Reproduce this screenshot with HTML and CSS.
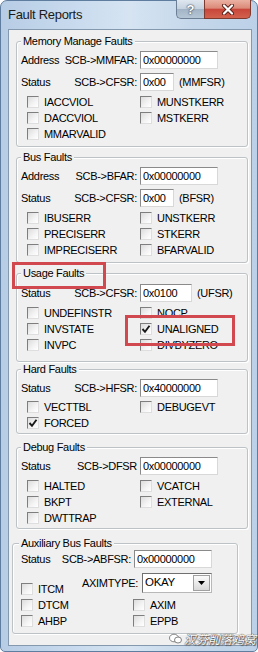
FILE: index.html
```html
<!DOCTYPE html>
<html>
<head>
<meta charset="utf-8">
<link rel="stylesheet" href="styles.css">
</head>
<body>
<div class="window">
  <div class="titlebar">
    <span class="title">Fault Reports</span>
    <div class="btns">
      <span class="btn help">?</span>
      <span class="btn close"><svg width="14" height="11" viewBox="0 0 14 11"><path d="M3 1.5 L11 9.5 M11 1.5 L3 9.5" stroke="#5a1e16" stroke-width="4" stroke-linecap="round"/><path d="M3 1.5 L11 9.5 M11 1.5 L3 9.5" stroke="#fff" stroke-width="2.2" stroke-linecap="round"/></svg></span>
    </div>
  </div>
  <div class="client">
    <div class="group g1">
      <span class="legend">Memory Manage Faults</span>
      <div class="row"><div class="lab"><span>Address</span><span>SCB-&gt;MMFAR:</span></div><span class="tb w78">0x00000000</span></div>
      <div class="row next"><div class="lab"><span>Status</span><span>SCB-&gt;CFSR:</span></div><span class="tb w34">0x00</span><span class="sfx">(MMFSR)</span></div>
      <div class="checks">
        <div class="cb"><span class="box"></span>IACCVIOL</div>
        <div class="cb"><span class="box"></span>MUNSTKERR</div>
        <div class="cb"><span class="box"></span>DACCVIOL</div>
        <div class="cb"><span class="box"></span>MSTKERR</div>
        <div class="cb"><span class="box"></span>MMARVALID</div>
      </div>
    </div>
    <div class="group g2">
      <span class="legend">Bus Faults</span>
      <div class="row"><div class="lab"><span>Address</span><span>SCB-&gt;BFAR:</span></div><span class="tb w78">0x00000000</span></div>
      <div class="row next"><div class="lab"><span>Status</span><span>SCB-&gt;CFSR:</span></div><span class="tb w34">0x00</span><span class="sfx">(BFSR)</span></div>
      <div class="checks">
        <div class="cb"><span class="box"></span>IBUSERR</div>
        <div class="cb"><span class="box"></span>UNSTKERR</div>
        <div class="cb"><span class="box"></span>PRECISERR</div>
        <div class="cb"><span class="box"></span>STKERR</div>
        <div class="cb"><span class="box"></span>IMPRECISERR</div>
        <div class="cb"><span class="box"></span>BFARVALID</div>
      </div>
    </div>
    <div class="group g3">
      <span class="legend">Usage Faults</span>
      <div class="row"><div class="lab"><span>Status</span><span>SCB-&gt;CFSR:</span></div><span class="tb w52">0x0100</span><span class="sfx">(UFSR)</span></div>
      <div class="checks">
        <div class="cb"><span class="box"></span>UNDEFINSTR</div>
        <div class="cb"><span class="box"></span>NOCP</div>
        <div class="cb"><span class="box"></span>INVSTATE</div>
        <div class="cb"><span class="box checked"><svg width="10" height="10" viewBox="0 0 10 10"><path d="M1.5 5 L4 7.8 L8.5 1.8" fill="none" stroke="#1a1a1a" stroke-width="1.9"/></svg></span>UNALIGNED</div>
        <div class="cb"><span class="box"></span>INVPC</div>
        <div class="cb"><span class="box"></span>DIVBYZERO</div>
      </div>
      <span class="mark mark-title"></span>
      <span class="mark mark-item"></span>
    </div>
    <div class="group g4">
      <span class="legend">Hard Faults</span>
      <div class="row"><div class="lab"><span>Status</span><span>SCB-&gt;HFSR:</span></div><span class="tb w78">0x40000000</span></div>
      <div class="checks">
        <div class="cb"><span class="box"></span>VECTTBL</div>
        <div class="cb"><span class="box"></span>DEBUGEVT</div>
        <div class="cb"><span class="box checked"><svg width="10" height="10" viewBox="0 0 10 10"><path d="M1.5 5 L4 7.8 L8.5 1.8" fill="none" stroke="#1a1a1a" stroke-width="1.9"/></svg></span>FORCED</div>
      </div>
    </div>
    <div class="group g5">
      <span class="legend">Debug Faults</span>
      <div class="row"><div class="lab"><span>Status</span><span>SCB-&gt;DFSR</span></div><span class="tb w78">0x00000000</span></div>
      <div class="checks">
        <div class="cb"><span class="box"></span>HALTED</div>
        <div class="cb"><span class="box"></span>VCATCH</div>
        <div class="cb"><span class="box"></span>BKPT</div>
        <div class="cb"><span class="box"></span>EXTERNAL</div>
        <div class="cb"><span class="box"></span>DWTTRAP</div>
      </div>
    </div>
    <div class="group g6">
      <span class="legend">Auxiliary Bus Faults</span>
      <div class="row"><div class="lab"><span>Status</span><span>SCB-&gt;ABFSR:</span></div><span class="tb w78">0x00000000</span></div>
      <div class="combo-row">
        <div class="cb itcm"><span class="box"></span>ITCM</div>
        <span class="axlab">AXIMTYPE:</span>
        <span class="select"><span class="sel-text">OKAY</span><span class="sel-btn"><svg width="7" height="4" viewBox="0 0 7 4"><path d="M0 0 H7 L3.5 4 Z" fill="#000"/></svg></span></span>
      </div>
      <div class="checks">
        <div class="cb"><span class="box"></span>DTCM</div>
        <div class="cb"><span class="box"></span>AXIM</div>
        <div class="cb"><span class="box"></span>AHBP</div>
        <div class="cb"><span class="box"></span>EPPB</div>
      </div>
    </div>
  </div>
  <div class="watermark">
    <svg width="13" height="11" viewBox="0 0 13 11"><ellipse cx="5" cy="5" rx="4.5" ry="3.8" fill="#fff" stroke="#666" stroke-width="0.8"/><ellipse cx="9" cy="7" rx="3.5" ry="3" fill="#fff" stroke="#666" stroke-width="0.8"/></svg>
    <span class="wm-text">汉芬削落鸡窝</span>
  </div>
</div>
</body>
</html>
```
FILE: styles.css
```css
html, body {
  margin: 0;
  padding: 0;
  background: #ffffff;
}

body {
  width: 258px;
  height: 652px;
  overflow: hidden;
  font-family: "Liberation Sans", Arial, sans-serif;
  font-size: 11px;
  letter-spacing: -0.3px;
  color: #000;
}

.window {
  position: relative;
  box-sizing: border-box;
  width: 258px;
  height: 652px;
  border: 1px solid #5f7e9f;
  border-radius: 7px 7px 5px 5px;
  background: linear-gradient(90deg, #b7cde5 0%, #c9dbee 30%, #d6e4f2 50%, #c4d7ea 75%, #bcd1e8 100%);
}

.titlebar {
  display: flex;
  align-items: flex-start;
  height: 28px;
}

.title {
  margin-top: 7px;
  padding-left: 7px;
  font-size: 13px;
  line-height: 14px;
  color: #1b1b1b;
}

.btns {
  display: flex;
  margin-left: auto;
  margin-right: 6px;
  margin-top: -1px;
}

.btn {
  box-sizing: border-box;
  height: 19px;
  display: flex;
  align-items: center;
  justify-content: center;
}

.help {
  width: 28px;
  border: 1px solid #6d7f95;
  border-top: none;
  border-right: none;
  border-radius: 0 0 0 5px;
  background: linear-gradient(#dfe7ef 0%, #c5d2df 48%, #a3b4c6 52%, #b5c6d6 100%);
  color: #fff;
  font-weight: bold;
  font-size: 13px;
  letter-spacing: 0;
  text-shadow: 0 0 2px #2d3b4c, 0 0 1px #2d3b4c;
}

.close {
  width: 47px;
  border: 1px solid #7d3a2e;
  border-top: none;
  border-radius: 0 0 5px 0;
  background: linear-gradient(#eab1a3 0%, #dc8a78 45%, #c8473a 52%, #d2614e 100%);
}

.client {
  box-sizing: border-box;
  width: 244px;
  height: 617px;
  margin-left: 7px;
  border: 1px solid #8498ae;
  background: #f0f0f0;
  display: flow-root;
}

.group {
  position: relative;
  box-sizing: border-box;
  width: 232px;
  margin-left: 7px;
  border: 1px solid #bdc2c6;
  border-radius: 3px;
  box-shadow: inset 1px 1px 0 #ffffff, 1px 1px 0 #ffffff;
  padding: 9px 0 4px 4px;
}

.g1 { margin-top: 11px; }
.g2 { margin-top: 10px; }
.g3 { margin-top: 10px; padding-top: 10px; padding-bottom: 8px; }
.g4 { margin-top: 7px; padding-bottom: 2px; }
.g5 { margin-top: 13px; padding-bottom: 2px; }
.g6 {
  margin-top: 14px;
  margin-left: 3px;
  width: 226px;
  padding: 6px 0 4px 8px;
}

.legend {
  position: absolute;
  top: -7px;
  left: 4px;
  padding: 0 2px;
  line-height: 12px;
  background: #f0f0f0;
}

.g6 .legend { left: 6px; }

.row {
  display: flex;
  align-items: center;
  height: 18px;
}

.row.next { margin-top: 4px; }

.lab {
  width: 116px;
  display: flex;
  justify-content: space-between;
}

.g6 .lab { width: 110px; }

.tb {
  box-sizing: border-box;
  height: 18px;
  margin-left: 3px;
  padding-left: 2px;
  line-height: 16px;
  background: #ffffff;
  border: 1px solid;
  border-color: #8a8a8a #d8d8d8 #d8d8d8 #8a8a8a;
}

.w78 { width: 78px; }
.w34 { width: 34px; }
.w52 { width: 52px; }

.sfx { margin-left: 5px; }

.checks {
  display: grid;
  grid-template-columns: 113px auto;
  grid-auto-rows: 16px;
  margin-top: 3px;
  margin-left: 6px;
}

.g4 .checks { margin-top: 2px; }
.g6 .checks {
  margin-left: 0;
  margin-top: 0;
  grid-template-columns: 112px auto;
}

.cb {
  display: flex;
  align-items: center;
  height: 16px;
}

.box {
  box-sizing: border-box;
  width: 12px;
  height: 12px;
  margin-right: 5px;
  border: 1px solid;
  border-color: #7e7e7e #dedede #dedede #7e7e7e;
  background: linear-gradient(135deg, #dcdcdc 0%, #f4f4f4 60%, #ffffff 100%);
  display: flex;
  align-items: center;
  justify-content: center;
}

.box svg { display: block; }

.combo-row {
  display: flex;
  align-items: flex-start;
  height: 24px;
  margin-top: 5px;
}

.itcm {
  width: 61px;
  margin-top: 8px;
}

.axlab {
  margin-top: 3px;
  line-height: 14px;
}

.select {
  box-sizing: border-box;
  display: flex;
  align-items: center;
  width: 70px;
  height: 20px;
  margin-left: 4px;
  border: 1px solid;
  border-color: #707070 #b8b8b8 #b8b8b8 #707070;
  background: #ffffff;
}

.sel-text {
  flex: 1;
  padding-left: 2px;
  margin-top: -3px;
  font-size: 11.5px;
}

.sel-btn {
  box-sizing: border-box;
  width: 17px;
  height: 16px;
  margin-right: 1px;
  border: 1px solid #a0a0a0;
  background: linear-gradient(#fbfbfb, #d9d9d9);
  display: flex;
  align-items: center;
  justify-content: center;
}

.mark {
  position: absolute;
  box-sizing: border-box;
  border: 3px solid #d2484f;
}

.mark-title {
  left: -5px;
  top: -12px;
  width: 94px;
  height: 27px;
}

.mark-item {
  left: 108px;
  top: 41px;
  width: 110px;
  height: 31px;
}

.watermark {
  position: absolute;
  left: 168px;
  top: 629px;
  display: flex;
  align-items: center;
  gap: 2px;
}

.wm-text {
  font-family: "Noto Sans CJK SC", sans-serif;
  font-size: 12px;
  letter-spacing: 0;
  font-style: italic;
  color: #ffffff;
  text-shadow: 0 0 1px #444, 0 0 1px #444, 1px 1px 1px #555;
}
```
